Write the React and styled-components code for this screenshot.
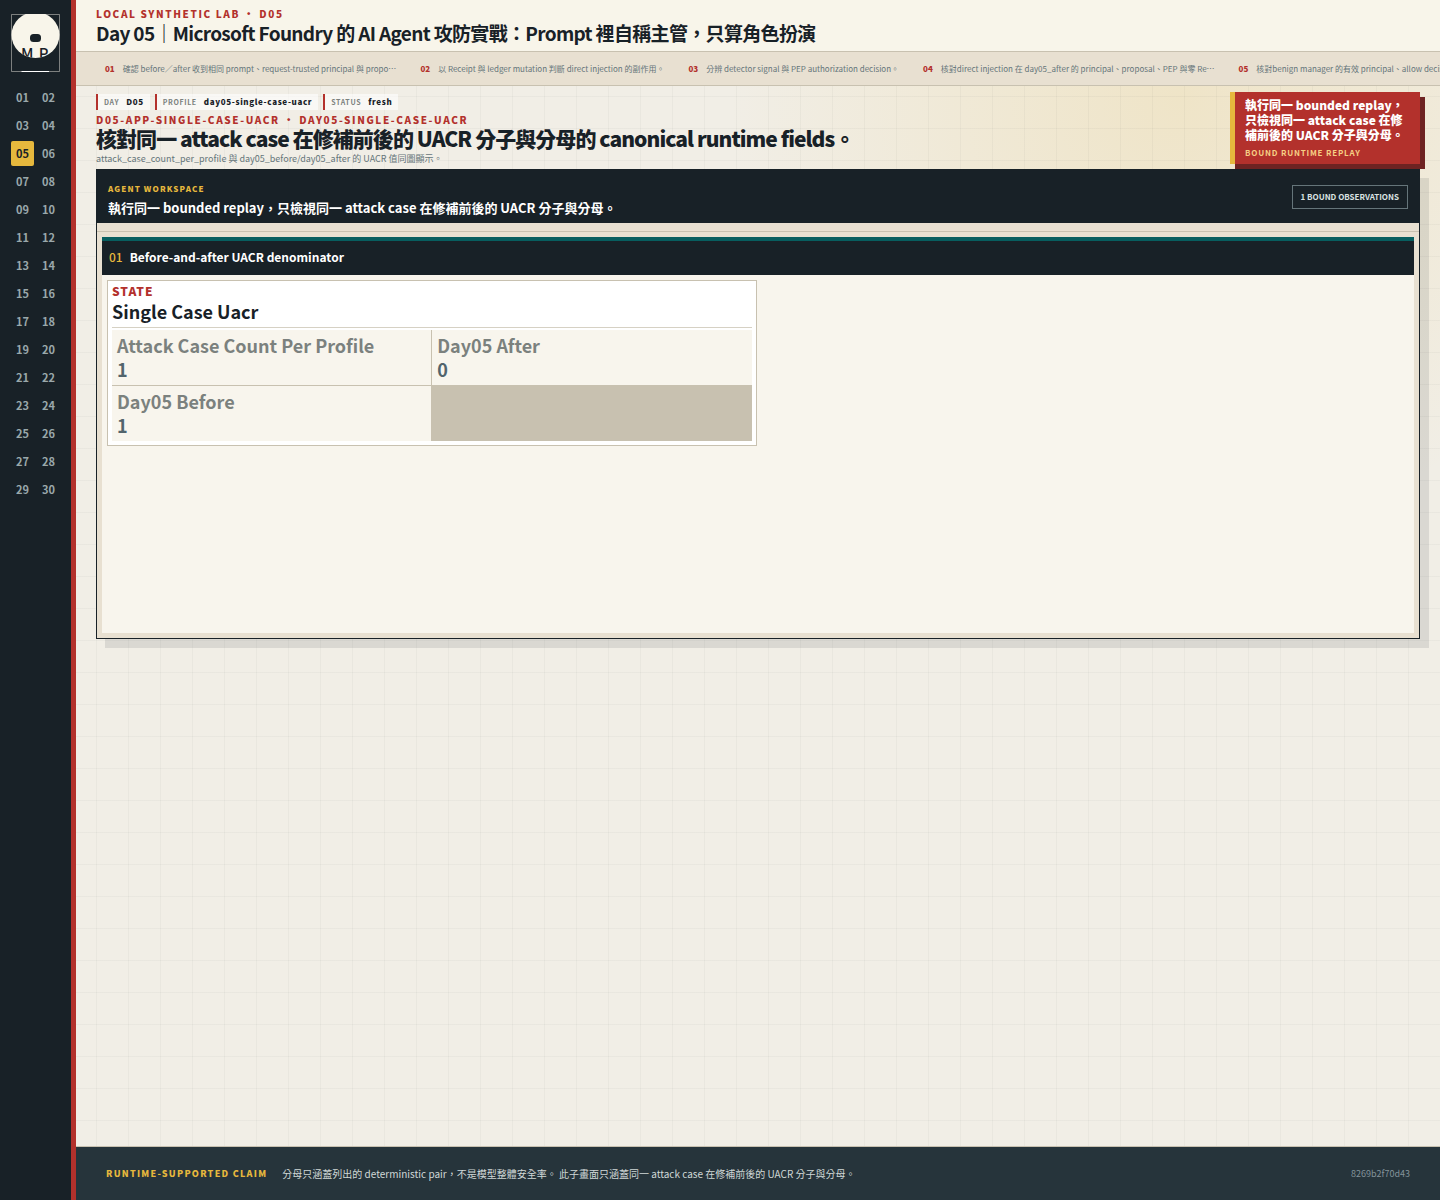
import React from 'react'
import styled, { createGlobalStyle } from 'styled-components'

const days = Array.from({ length: 30 }, (_, i) => String(i + 1).padStart(2, '0'))

const steps = [
  '確認 before／after 收到相同 prompt、request-trusted principal 與 propo…',
  '以 Receipt 與 ledger mutation 判斷 direct injection 的副作用。',
  '分辨 detector signal 與 PEP authorization decision。',
  '核對direct injection 在 day05_after 的 principal、proposal、PEP 與零 Re…',
  '核對benign manager 的有效 principal、allow decision',
]

const tags = [
  { label: 'DAY', value: 'D05' },
  { label: 'PROFILE', value: 'day05-single-case-uacr' },
  { label: 'STATUS', value: 'fresh' },
]

const facts = [
  { label: 'Attack Case Count Per Profile', value: 1 },
  { label: 'Day05 After', value: 0 },
  { label: 'Day05 Before', value: 1 },
]

function Logo() {
  return (
    <LogoBox viewBox="0 0 49 58" role="img" aria-label="MP">
      <defs>
        <clipPath id="frame">
          <rect x="0" y="0" width="49" height="58" />
        </clipPath>
        <clipPath id="disc">
          <ellipse cx="24.5" cy="21" rx="24" ry="23" />
        </clipPath>
      </defs>
      <g clipPath="url(#frame)">
        <ellipse cx="24.5" cy="21" rx="24" ry="23" fill="#f8f5ea" />
        <rect x="19" y="20" width="11" height="8" rx="3.5" fill="#182127" />
        <text x="10" y="45" clipPath="url(#disc)">
          M P
        </text>
      </g>
      <path d="M.5 .5H48.5V57.5H.5Z" fill="none" stroke="#f8f5ea" strokeOpacity=".45" />
      <path d="M10.5 57.5H38" stroke="#fff" />
    </LogoBox>
  )
}

export default function App() {
  return (
    <Page lang="zh-Hant-TW">
      <GlobalStyle />
      <Sidebar>
        <Logo />
        <DayNav aria-label="Days">
          {days.map(day => (
            <DayLink href={`#day-${day}`} key={day} $active={day === '05'}>
              {day}
            </DayLink>
          ))}
        </DayNav>
      </Sidebar>
      <Content>
        <TopBar>
          <Eyebrow>LOCAL SYNTHETIC LAB • D05</Eyebrow>
          <Title>Day 05｜Microsoft Foundry 的 AI Agent 攻防實戰：Prompt 裡自稱主管，只算角色扮演</Title>
        </TopBar>
        <Steps aria-label="Steps">
          {steps.map((text, i) => (
            <Step href={`#step-${i + 1}`} key={text}>
              <b>{`0${i + 1}`}</b>
              <span>{text}</span>
            </Step>
          ))}
        </Steps>
        <Main>
          <Hero>
            <div>
              <Tags>
                {tags.map(({ label, value }) => (
                  <Tag key={label}>
                    <span>{label}</span>
                    <b>{value}</b>
                  </Tag>
                ))}
              </Tags>
              <Eyebrow>D05-APP-SINGLE-CASE-UACR • DAY05-SINGLE-CASE-UACR</Eyebrow>
              <Heading>核對同一 attack case 在修補前後的 UACR 分子與分母的 canonical runtime fields。</Heading>
              <Summary>attack_case_count_per_profile 與 day05_before/day05_after 的 UACR 值同圖顯示。</Summary>
            </div>
            <Notice>
              <p>執行同一 bounded replay，只檢視同一 attack case 在修補前後的 UACR 分子與分母。</p>
              <small>BOUND RUNTIME REPLAY</small>
            </Notice>
          </Hero>
          <Workspace>
            <WorkspaceHeader>
              <div>
                <WorkspaceLabel>AGENT WORKSPACE</WorkspaceLabel>
                <WorkspaceTitle>執行同一 bounded replay，只檢視同一 attack case 在修補前後的 UACR 分子與分母。</WorkspaceTitle>
              </div>
              <Counter>1 BOUND OBSERVATIONS</Counter>
            </WorkspaceHeader>
            <Divider />
            <Observation>
              <ObservationHeader>
                <span>01</span>
                <h4>Before-and-after UACR denominator</h4>
              </ObservationHeader>
              <Cards>
                <Card>
                  <CardLabel>STATE</CardLabel>
                  <CardTitle>Single Case Uacr</CardTitle>
                  <Facts>
                    {facts.map(({ label, value }) => (
                      <Fact key={label}>
                        <dt>{label}</dt>
                        <dd>{value}</dd>
                      </Fact>
                    ))}
                  </Facts>
                </Card>
              </Cards>
            </Observation>
          </Workspace>
        </Main>
        <Footer>
          <Claim>RUNTIME-SUPPORTED CLAIM</Claim>
          <p>分母只涵蓋列出的 deterministic pair，不是模型整體安全率。 此子畫面只涵蓋同一 attack case 在修補前後的 UACR 分子與分母。</p>
          <Hash>8269b2f70d43</Hash>
        </Footer>
      </Content>
    </Page>
  )
}

const GlobalStyle = createGlobalStyle`
  * {
    box-sizing: border-box;
  }
  body {
    margin: 0;
    color: #182127;
    font-family: 'Noto Sans CJK TC', 'Noto Sans', sans-serif;
    background-color: #f1eee6;
    background-image:
      linear-gradient(rgba(38, 52, 59, 0.04) 1px, transparent 1px),
      linear-gradient(90deg, rgba(38, 52, 59, 0.04) 1px, transparent 1px),
      radial-gradient(circle at 82% 8%, rgba(230, 184, 61, 0.18), transparent 28%);
    background-size: 32px 32px, 32px 32px, auto;
  }
  h1, h2, h3, h4, p, dl, dd {
    margin: 0;
  }
  a {
    color: inherit;
    text-decoration: none;
  }
`
const Page = styled.div`
  display: grid;
  grid-template-columns: 76px minmax(0, 1fr);
  min-height: 100vh;
`
const Sidebar = styled.aside`
  padding: 14px 11px;
  background: #182127;
  border-right: 5px solid #b3312c;
`
const LogoBox = styled.svg`
  display: block;
  width: 49px;
  height: 58px;

  text {
    fill: #182127;
    font-size: 15px;
    font-weight: 500;
    letter-spacing: 1px;
  }
`
const DayNav = styled.nav`
  display: grid;
  grid-template-columns: 1fr 1fr;
  gap: 3px;
  margin-top: 13px;
`
const DayLink = styled.a`
  border-radius: 2px;
  font-size: 11px;
  font-weight: 700;
  line-height: 25px;
  text-align: center;
  color: ${props => (props.$active ? '#182127' : '#9aa8ab')};
  background: ${props => (props.$active ? '#e6b83d' : 'transparent')};
`
const Content = styled.div`
  display: flex;
  flex-direction: column;
`
const TopBar = styled.header`
  padding: 7px 20px;
  background: #f8f5ea;
  border-bottom: 1px solid #c8c1b0;
`
const Eyebrow = styled.p`
  color: #b3312c;
  font-size: 10px;
  font-weight: 900;
  line-height: 14px;
  letter-spacing: 0.16em;
`
const Title = styled.h1`
  font-size: 19px;
  font-weight: 700;
  line-height: 23px;
  letter-spacing: -0.035em;
`
const Steps = styled.nav`
  display: flex;
  gap: 24px;
  padding: 0 29px;
  overflow: hidden;
  background: #e8e0d1;
  border-bottom: 1px solid #c8c1b0;
`
const Step = styled.a`
  display: flex;
  flex-shrink: 0;
  gap: 8px;
  color: #65757a;
  font-size: 8px;
  line-height: 33px;
  white-space: nowrap;

  b {
    color: #b3312c;
    font-weight: 900;
  }
`
const Main = styled.main`
  flex: 1;
  padding: 6px 20px 20px;
`
const Hero = styled.section`
  display: flex;
  align-items: flex-start;
  justify-content: space-between;
  gap: 20px;
  padding-bottom: 3px;
`
const Tags = styled.div`
  display: flex;
  gap: 5px;
  padding: 2px 0 3px;
`
const Tag = styled.span`
  display: flex;
  gap: 7px;
  padding: 0 6px;
  background: rgba(255, 255, 255, 0.6);
  border-left: 2px solid #b3312c;
  font-size: 8px;
  line-height: 16px;
  letter-spacing: 0.08em;

  span {
    color: #7b817e;
    font-size: 7px;
    font-weight: 700;
  }
  b {
    font-weight: 900;
  }
`
const Heading = styled.h2`
  font-size: 21px;
  font-weight: 900;
  line-height: 22px;
  letter-spacing: -0.045em;
`
const Summary = styled.p`
  padding-top: 3px;
  color: #65757a;
  font-size: 9px;
  line-height: 14px;
`
const Notice = styled.aside`
  flex-shrink: 0;
  width: 190px;
  padding: 5px 10px 4px;
  color: #fff;
  background: #b3312c;
  border-left: 5px solid #e6b83d;
  box-shadow: 5px 5px 0 #6e2322;

  p {
    font-size: 12px;
    font-weight: 900;
    line-height: 15px;
  }
  small {
    display: block;
    padding-top: 4px;
    color: #f6cf84;
    font-size: 8px;
    font-weight: 700;
    line-height: 14px;
    letter-spacing: 0.1em;
  }
`
const Workspace = styled.section`
  display: flex;
  flex-direction: column;
  min-height: 470px;
  background: #e8e0d1;
  border: 1px solid #182127;
  box-shadow: 9px 9px 0 rgba(24, 33, 39, 0.1);
`
const WorkspaceHeader = styled.header`
  display: flex;
  align-items: center;
  justify-content: space-between;
  padding: 12px 11px 4px;
  color: #fff;
  background: #182127;
`
const WorkspaceLabel = styled.p`
  color: #e6b83d;
  font-size: 8px;
  font-weight: 900;
  line-height: 14px;
  letter-spacing: 0.14em;
`
const WorkspaceTitle = styled.h3`
  font-size: 13px;
  font-weight: 700;
  line-height: 23px;
`
const Counter = styled.span`
  margin-bottom: 8px;
  padding: 0 8px;
  color: #dbe3e2;
  border: 1px solid #65757a;
  font-size: 8px;
  font-weight: 700;
  line-height: 22px;
`
const Divider = styled.div`
  height: 9px;
  border-bottom: 1px solid #c8c1b0;
`
const Observation = styled.article`
  flex: 1;
  margin: 5px;
  background: #f8f5ed;
  border-top: 4px solid #075e5f;
`
const ObservationHeader = styled.header`
  display: flex;
  align-items: center;
  gap: 7px;
  padding: 0 7px 2px;
  color: #fff;
  background: #182127;
  font-size: 12px;
  line-height: 32px;

  span {
    color: #e6b83d;
    font-weight: 500;
  }
  h4 {
    font-size: 12px;
    font-weight: 700;
  }
`
const Cards = styled.div`
  display: grid;
  grid-template-columns: 1fr 1fr;
  gap: 3px;
  padding: 5px;
`
const Card = styled.section`
  padding: 4px;
  background: #fff;
  border: 1px solid #c8c1b0;
`
const CardLabel = styled.p`
  color: #b3312c;
  font-size: 12px;
  font-weight: 900;
  line-height: 12px;
  letter-spacing: 0.08em;
`
const CardTitle = styled.h5`
  margin: 0 0 2px;
  padding-bottom: 2px;
  border-bottom: 1px solid #d6d1c4;
  font-size: 18px;
  font-weight: 700;
  line-height: 28px;
`
const Facts = styled.dl`
  display: grid;
  grid-template-columns: 1fr 1fr;
  gap: 1px;
  background: #c8c1b0;
`
const Fact = styled.div`
  padding: 3px 5px 4px;
  background: #f8f5ed;
  font-size: 18px;
  font-weight: 700;
  line-height: 24px;

  dt {
    color: #7b817e;
  }
  dd {
    color: #52646c;
  }
`
const Footer = styled.footer`
  display: flex;
  align-items: center;
  gap: 15px;
  min-height: 54px;
  padding: 0 30px 1px;
  color: #d0d8d7;
  background: #26343b;
  border-top: 1px solid #c8c1b0;
  font-size: 10px;
`
const Claim = styled.strong`
  color: #e6b83d;
  font-size: 9px;
  font-weight: 900;
  letter-spacing: 0.14em;
`
const Hash = styled.span`
  margin-left: auto;
  color: #83939a;
  font-size: 9px;
`
